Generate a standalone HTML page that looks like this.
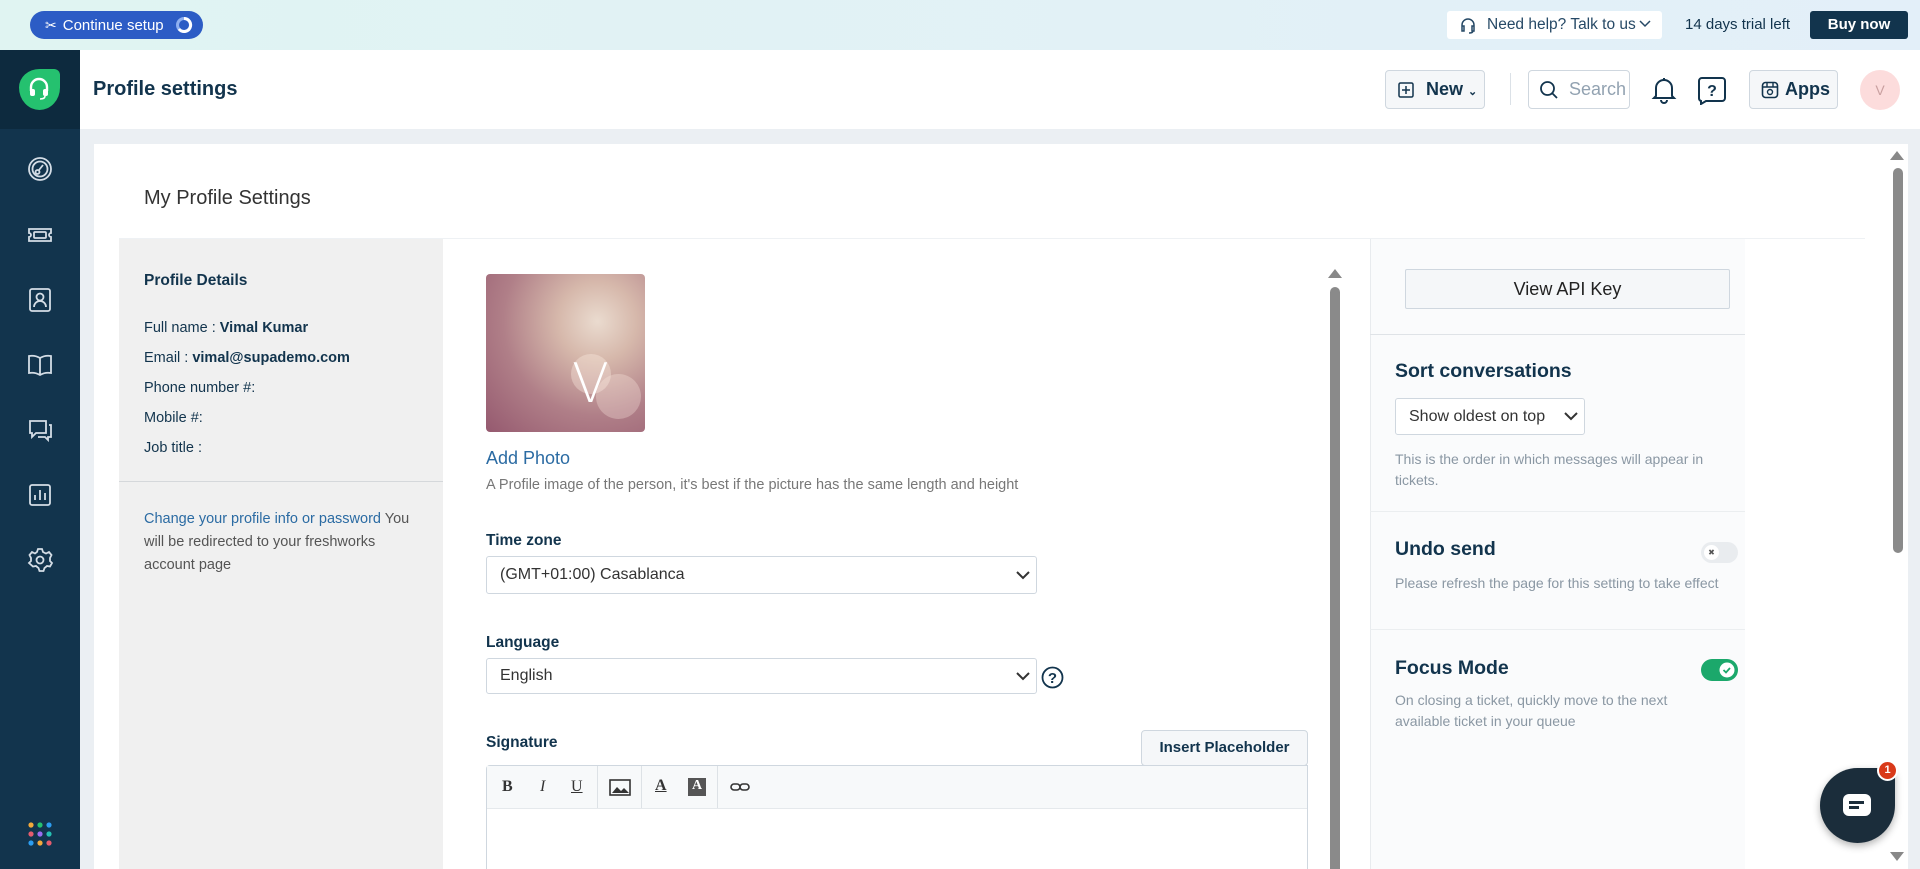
<!DOCTYPE html>
<html style="overflow:hidden;height:869px"><head><meta charset="utf-8"><style>
*{box-sizing:border-box;margin:0;padding:0}
body{width:1920px;height:869px;overflow:hidden;font-family:"Liberation Sans",sans-serif;color:#12344d;background:#ebeff3;position:relative}
.a{position:absolute}
.top{left:0;top:0;width:1920px;height:50px;background:linear-gradient(90deg,#e0f4f2,#e3eff9)}
.side{left:0;top:50px;width:80px;height:819px;background:#12344d}
.hdr{left:80px;top:50px;width:1840px;height:79px;background:#fff}
.card{left:94px;top:144px;width:1792px;height:725px;background:#fff}
.btn{border:1px solid #cfd7df;border-radius:4px;background:#f5f7f9}
.lbl{font-size:15.5px;font-weight:bold;color:#12344d}
.sel{border:1px solid #cfd7df;border-radius:3px;background:#fff;font-size:16px;color:#333;padding-left:13px;display:flex;align-items:center}
.sel svg{position:absolute;right:6px}
.ic{left:25px;width:30px;height:30px}
.rt{font-size:19.5px;font-weight:600;color:#12344d}
.ds{font-size:14px;color:#8a97a3;line-height:21px}
</style></head><body>
<div class="a top"></div>
<div class="a" style="left:30px;top:11px;width:173px;height:28px;border-radius:14px;background:#2c5cc5;color:#fff;font-size:15px;display:flex;align-items:center;padding-left:15px">
<span style="font-size:14px;margin-right:6px">✂</span>Continue setup
<svg class="a" style="right:10px;top:5px" width="18" height="18" viewBox="0 0 18 18"><circle cx="9" cy="9" r="6.5" fill="none" stroke="#8fb0f0" stroke-width="3"/><path d="M9 2.5A6.5 6.5 0 1 1 4 13" fill="none" stroke="#fff" stroke-width="3"/></svg></div>
<div class="a" style="left:1447px;top:11px;width:215px;height:28px;background:#fff;border-radius:3px;font-size:15.5px;color:#264966;display:flex;align-items:center;padding-left:40px">Need help? Talk to us
<svg class="a" style="left:13px;top:6px" width="16" height="17" viewBox="0 0 16 17"><path d="M2 10V8a6 6 0 0 1 12 0v2M2 9h2v5H2zM12 9h2v5h-2zM13 14q0 2-4 2" fill="none" stroke="#264966" stroke-width="1.5"/></svg>
<svg class="a" style="left:192px;top:9px" width="12" height="9"><path d="M1 1l5 5 5-5" fill="none" stroke="#264966" stroke-width="1.5"/></svg></div>
<div class="a" style="left:1685px;top:16px;font-size:15px;color:#12344d">14 days trial left</div>
<div class="a" style="left:1810px;top:11px;width:98px;height:28px;background:#12344d;border-radius:3px;color:#fff;font-size:15px;font-weight:bold;text-align:center;line-height:28px">Buy now</div>

<div class="a side"></div>
<div class="a" style="left:0;top:50px;width:80px;height:79px;background:#0d2a3e"></div>
<div class="a" style="left:19px;top:69px;width:41px;height:41px;background:#25c16f;border-radius:50% 50% 50% 50%/45% 45% 55% 55%;border-top-right-radius:6px"></div>
<svg class="a" style="left:28px;top:77px" width="22" height="24" viewBox="0 0 22 24"><path d="M3 14V10a8 8 0 0 1 16 0v4" fill="none" stroke="#fff" stroke-width="2.4"/><rect x="2" y="12" width="5" height="7" rx="2" fill="#fff"/><rect x="15" y="12" width="5" height="7" rx="2" fill="#fff"/><path d="M17 19q0 3-5 3" fill="none" stroke="#fff" stroke-width="1.6"/></svg>
<svg class="a ic" style="top:154px" viewBox="0 0 30 30" fill="none" stroke="#d4dde6" stroke-width="1.8"><circle cx="15" cy="15" r="11"/><circle cx="15" cy="15" r="7.5"/><circle cx="12.5" cy="18" r="2"/><path d="M14 16l4-5"/></svg>
<svg class="a ic" style="top:220px" viewBox="0 0 30 30" fill="none" stroke="#d4dde6" stroke-width="1.8"><path d="M4 9h22v4a2 2 0 0 0 0 4v4H4v-4a2 2 0 0 0 0-4z"/><rect x="9" y="12" width="12" height="6" rx="1"/></svg>
<svg class="a ic" style="top:285px" viewBox="0 0 30 30" fill="none" stroke="#d4dde6" stroke-width="1.8"><rect x="5" y="4" width="20" height="22" rx="2"/><circle cx="15" cy="12" r="3.5"/><path d="M9 22a6 6 0 0 1 12 0"/></svg>
<svg class="a ic" style="top:350px" viewBox="0 0 30 30" fill="none" stroke="#d4dde6" stroke-width="1.8"><path d="M15 8q-5-3-11-2v17q6-1 11 2q5-3 11-2V6q-6-1-11 2zM15 8v17"/></svg>
<svg class="a ic" style="top:415px" viewBox="0 0 30 30" fill="none" stroke="#d4dde6" stroke-width="1.8"><path d="M5 6h16v12H11l-4 4v-4H5zM24 10h2v12h-3v3l-3-3h-7"/></svg>
<svg class="a ic" style="top:480px" viewBox="0 0 30 30" fill="none" stroke="#d4dde6" stroke-width="1.8"><rect x="5" y="5" width="20" height="20" rx="2"/><path d="M10 20v-5M15 20V10M20 20v-7"/></svg>
<svg class="a ic" style="top:545px" viewBox="0 0 30 30" fill="none" stroke="#d4dde6" stroke-width="1.8"><circle cx="15" cy="15" r="3.5"/><path d="M13 4h4l1 3 3 1.5 3-1.5 2.5 3-1.5 3v3l2 2-2 3.5-3-.5-2.5 2-1 3h-4l-1-3-2.5-2-3 .5L4 18l2-2v-3L4.5 10 7 7l3 1.5L12 7z"/></svg>
<svg class="a" style="left:28px;top:822px" width="24" height="24"><circle cx="3" cy="3" r="2.6" fill="#f2a93b"/><circle cx="12" cy="3" r="2.6" fill="#25c16f"/><circle cx="21" cy="3" r="2.6" fill="#2c9df0"/><circle cx="3" cy="12" r="2.6" fill="#e45c6e"/><circle cx="12" cy="12" r="2.6" fill="#9b6cf0"/><circle cx="21" cy="12" r="2.6" fill="#25c1b3"/><circle cx="3" cy="21" r="2.6" fill="#2c9df0"/><circle cx="12" cy="21" r="2.6" fill="#f2a93b"/><circle cx="21" cy="21" r="2.6" fill="#e45c6e"/></svg>

<div class="a hdr"></div>
<div class="a" style="left:93px;top:78px;font-size:20px;font-weight:600;color:#12344d">Profile settings</div>
<div class="a btn" style="left:1385px;top:70px;width:100px;height:39px;font-size:18px;font-weight:600;padding-left:40px;line-height:37px">New <span style="font-size:11px">⌄</span>
<svg class="a" style="left:12px;top:11px" width="16" height="16"><rect x="1" y="1" width="14" height="14" rx="1.5" fill="none" stroke="#12344d" stroke-width="1.5"/><path d="M8 4v8M4 8h8" stroke="#12344d" stroke-width="1.5"/></svg></div>
<div class="a" style="left:1510px;top:73px;width:1px;height:32px;background:#dbe1e7"></div>
<div class="a" style="left:1528px;top:70px;width:102px;height:39px;border:1px solid #cfd7df;border-radius:4px;font-size:18px;color:#92a2b1;padding-left:40px;line-height:37px">Search
<svg class="a" style="left:10px;top:9px" width="20" height="20"><circle cx="8.5" cy="8.5" r="6.5" fill="none" stroke="#12344d" stroke-width="1.8"/><path d="M13 13l5 5" stroke="#12344d" stroke-width="1.8"/></svg></div>
<svg class="a" style="left:1651px;top:76px" width="26" height="28" viewBox="0 0 26 28"><path d="M5 20V12a8 8 0 0 1 16 0v8l2 2H3z" fill="none" stroke="#12344d" stroke-width="2"/><path d="M10 24a3 3 0 0 0 6 0" fill="none" stroke="#12344d" stroke-width="2"/><path d="M13 2v2" stroke="#12344d" stroke-width="2"/></svg>
<svg class="a" style="left:1697px;top:76px" width="30" height="29" viewBox="0 0 30 29"><path d="M5 2h20a3 3 0 0 1 3 3v17a3 3 0 0 1-3 3H9l-5 3v-3a3 3 0 0 1-2-3V5a3 3 0 0 1 3-3z" fill="none" stroke="#12344d" stroke-width="2"/><text x="15" y="20" font-size="16" font-weight="bold" text-anchor="middle" fill="#12344d" font-family="Liberation Sans">?</text></svg>
<div class="a btn" style="left:1749px;top:70px;width:89px;height:39px;font-size:18px;font-weight:600;padding-left:35px;line-height:37px">Apps
<svg class="a" style="left:11px;top:10px" width="18" height="18"><rect x="1.5" y="1.5" width="15" height="15" rx="3" fill="none" stroke="#12344d" stroke-width="1.6"/><path d="M1.5 6h15M6 1.5v4.5M12 1.5v4.5" stroke="#12344d" stroke-width="1.4"/><circle cx="9" cy="11" r="2.5" fill="none" stroke="#12344d" stroke-width="1.4"/></svg></div>
<div class="a" style="left:1860px;top:70px;width:40px;height:40px;border-radius:50%;background:#fcdcdc;color:#c9a0a0;font-size:14px;text-align:center;line-height:40px">V</div>

<div class="a card"></div>
<div class="a" style="left:1886px;top:144px;width:22px;height:725px;background:#fff"></div>
<svg class="a" style="left:1890px;top:151px" width="14" height="10"><path d="M7 0l7 9H0z" fill="#888"/></svg>
<div class="a" style="left:1893px;top:168px;width:10px;height:385px;border-radius:5px;background:#8a8a8a"></div>
<svg class="a" style="left:1890px;top:852px" width="14" height="10"><path d="M0 0h14L7 9z" fill="#888"/></svg>

<div class="a" style="left:144px;top:187px;font-size:20px;color:#333">My Profile Settings</div>
<div class="a" style="left:119px;top:238px;width:1746px;height:1px;background:#eef1f4"></div>

<div class="a" style="left:119px;top:239px;width:324px;height:630px;background:#f0f0f0"></div>
<div class="a" style="left:144px;top:272px;font-size:15.5px;font-weight:600;color:#12344d">Profile Details</div>
<div class="a" style="left:144px;top:313px;font-size:14.5px;line-height:30px;color:#12344d">Full name : <b>Vimal Kumar</b><br>Email : <b>vimal@supademo.com</b><br>Phone number #:<br>Mobile #:<br>Job title :</div>
<div class="a" style="left:119px;top:481px;width:324px;height:1px;background:#d5d8db"></div>
<div class="a" style="left:144px;top:508px;width:285px;font-size:14.5px;line-height:23px;color:#555"><span style="color:#2b6ba3">Change your profile info or password</span> You will be redirected to your freshworks account page</div>

<div class="a" style="left:486px;top:274px;width:159px;height:158px;border-radius:4px;background:radial-gradient(circle at 70% 30%,#eadbcf 0,#d6b8ab 25%,#b07f88 60%,#95596f 100%);overflow:hidden">
<div class="a" style="left:85px;top:80px;width:40px;height:40px;border-radius:50%;background:rgba(255,240,230,.35)"></div>
<div class="a" style="left:110px;top:100px;width:45px;height:45px;border-radius:50%;background:rgba(255,240,230,.3)"></div>
<div class="a" style="left:86px;top:78px;font-size:54px;color:#fff;font-family:'DejaVu Sans',sans-serif;font-weight:200">V</div></div>
<div class="a" style="left:486px;top:448px;font-size:18px;color:#2b6ba3">Add Photo</div>
<div class="a" style="left:486px;top:477px;font-size:14.5px;color:#777">A Profile image of the person, it's best if the picture has the same length and height</div>
<div class="a lbl" style="left:486px;top:532px">Time zone</div>
<div class="a sel" style="left:486px;top:556px;width:551px;height:38px">(GMT+01:00) Casablanca<svg width="14" height="9"><path d="M1 1l6 6 6-6" fill="none" stroke="#333" stroke-width="2"/></svg></div>
<div class="a lbl" style="left:486px;top:634px">Language</div>
<div class="a sel" style="left:486px;top:658px;width:551px;height:36px;border-radius:3px">English<svg width="14" height="9"><path d="M1 1l6 6 6-6" fill="none" stroke="#333" stroke-width="2"/></svg></div>
<svg class="a" style="left:1041px;top:666px" width="23" height="23"><circle cx="11.5" cy="11.5" r="10" fill="none" stroke="#12344d" stroke-width="1.8"/><text x="11.5" y="17" font-size="15" font-weight="bold" text-anchor="middle" fill="#12344d" font-family="Liberation Sans">?</text></svg>
<div class="a lbl" style="left:486px;top:734px">Signature</div>
<div class="a btn" style="left:1141px;top:730px;width:167px;height:36px;background:#f5f7f9;font-size:15px;font-weight:600;text-align:center;line-height:34px">Insert Placeholder</div>
<div class="a" style="left:486px;top:765px;width:822px;height:104px;border:1px solid #cfd7df;border-bottom:none;border-radius:4px 0 0 0;background:#fff"></div>
<div class="a" style="left:487px;top:766px;width:820px;height:43px;background:#f7f9fa;border-bottom:1px solid #e5e9ec;font-family:'Liberation Serif',serif;font-size:16px;color:#333">
<b class="a" style="left:15px;top:12px">B</b><i class="a" style="left:53px;top:12px">I</i><u class="a" style="left:84px;top:12px">U</u>
<div class="a" style="left:110px;top:0;width:1px;height:42px;background:#dde2e6"></div>
<svg class="a" style="left:122px;top:13px" width="22" height="17"><rect x="1" y="1" width="20" height="15" fill="none" stroke="#333" stroke-width="1.6"/><path d="M3 14l5-6 4 4 3-3 5 5z" fill="#333"/></svg>
<div class="a" style="left:154px;top:0;width:1px;height:42px;background:#dde2e6"></div>
<u class="a" style="left:168px;top:11px;font-weight:bold">A</u>
<div class="a" style="left:201px;top:12px;width:18px;height:18px;background:#555;color:#fff;font-size:14px;text-align:center;font-weight:bold">A</div>
<div class="a" style="left:230px;top:0;width:1px;height:42px;background:#dde2e6"></div>
<svg class="a" style="left:243px;top:15px" width="22" height="14"><rect x="1" y="3" width="9" height="6" rx="3" fill="none" stroke="#333" stroke-width="1.6"/><rect x="10" y="3" width="9" height="6" rx="3" fill="none" stroke="#333" stroke-width="1.6"/></svg></div>

<svg class="a" style="left:1328px;top:269px" width="14" height="10"><path d="M7 0l7 9H0z" fill="#888"/></svg>
<div class="a" style="left:1330px;top:287px;width:10px;height:582px;border-radius:5px 5px 0 0;background:#8a8a8a"></div>

<div class="a" style="left:1370px;top:239px;width:375px;height:630px;background:#fafbfc;border-left:1px solid #e8ebee"></div>
<div class="a btn" style="left:1405px;top:269px;width:325px;height:40px;font-size:18px;color:#222;text-align:center;line-height:38px;border-radius:2px">View API Key</div>
<div class="a" style="left:1370px;top:334px;width:375px;height:1px;background:#dfe3e7"></div>
<div class="a rt" style="left:1395px;top:360px">Sort conversations</div>
<div class="a sel" style="left:1395px;top:398px;width:190px;height:37px;font-size:16px">Show oldest on top<svg width="14" height="9"><path d="M1 1l6 6 6-6" fill="none" stroke="#333" stroke-width="2"/></svg></div>
<div class="a ds" style="left:1395px;top:449px;width:340px">This is the order in which messages will appear in tickets.</div>
<div class="a" style="left:1370px;top:511px;width:375px;height:1px;background:#ebeef0"></div>
<div class="a rt" style="left:1395px;top:538px">Undo send</div>
<div class="a" style="left:1701px;top:542px;width:37px;height:21px;border-radius:11px;background:#e9ecef"><div class="a" style="left:3px;top:3px;width:15px;height:15px;border-radius:50%;background:#fff;font-size:8px;text-align:center;line-height:15px;color:#555">✖</div></div>
<div class="a ds" style="left:1395px;top:573px">Please refresh the page for this setting to take effect</div>
<div class="a" style="left:1370px;top:629px;width:375px;height:1px;background:#ebeef0"></div>
<div class="a rt" style="left:1395px;top:657px">Focus Mode</div>
<div class="a" style="left:1701px;top:659px;width:37px;height:22px;border-radius:11px;background:#1ba86b"><svg class="a" style="left:18px;top:3px" width="16" height="16"><circle cx="8" cy="8" r="7.5" fill="#fff"/><path d="M4.5 8l2.5 2.5 4-4.5" fill="none" stroke="#1ba86b" stroke-width="1.8"/></svg></div>
<div class="a ds" style="left:1395px;top:690px;width:300px">On closing a ticket, quickly move to the next available ticket in your queue</div>

<div class="a" style="left:1820px;top:768px;width:75px;height:75px;border-radius:50% 8px 50% 50%;background:#1b2d3b;box-shadow:0 3px 8px rgba(0,0,0,.3)"></div>
<div class="a" style="left:1843px;top:794px;width:28px;height:22px;border-radius:6px;background:#fff"><div class="a" style="left:6px;top:7px;width:15px;height:2.5px;background:#1b2d3b"></div><div class="a" style="left:6px;top:12px;width:10px;height:2.5px;background:#1b2d3b"></div></div>
<div class="a" style="left:1877px;top:760px;width:21px;height:21px;border-radius:50%;background:#d93a1a;border:2px solid #fff;color:#fff;font-size:11px;font-weight:bold;text-align:center;line-height:17px">1</div>
</body></html>
